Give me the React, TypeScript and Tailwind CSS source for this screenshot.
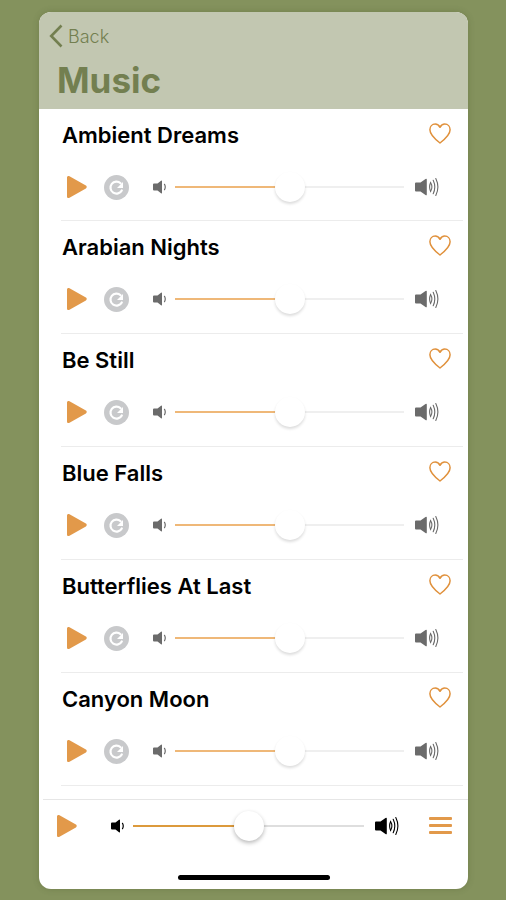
import { useState } from "react";

const tracks = [
  "Ambient Dreams",
  "Arabian Nights",
  "Be Still",
  "Blue Falls",
  "Butterflies At Last",
  "Canyon Moon",
];

export default function App() {
  return (
    <div className="flex min-h-screen flex-col bg-[#84925d] pt-3 pr-[38px] pb-[11px] pl-[39px] font-['Inter','Liberation_Sans',sans-serif]">
      <div className="flex flex-1 flex-col overflow-hidden rounded-xl bg-white shadow-[0_0_6px_rgba(60,70,30,0.25)]">
        {/* Header */}
        <header className="h-[97px] bg-[#c2c7b1] px-[10px] pt-3 text-[#737f50]">
          <a href="#back" className="flex h-6 items-center gap-[5px] text-[18px] font-light">
            <BackIcon />
            Back
          </a>
          <h1 className="mt-2 pl-2 text-[35px] leading-[48px] font-bold">Music</h1>
        </header>

        {/* Track list */}
        <ul className="flex-1 pb-[13px]">
          {tracks.map((name) => (
            <TrackRow key={name} name={name} />
          ))}
        </ul>

        {/* Player bar */}
        <footer className="ml-1 flex h-[90px] flex-col items-center border-t border-[#e6e6e6]">
          <div className="flex h-[52px] w-full items-center pr-4 pl-[14px]">
            <button type="button" aria-label="Play all">
              <PlayIcon />
            </button>
            <SpeakerLow className="ml-[34px] text-black" />
            <VolumeSlider
              label="Master volume"
              fill="#dc9a3c"
              rest="#dedede"
              thumb="[&::-webkit-slider-thumb]:shadow-[0_2px_4px_rgba(0,0,0,0.28)]"
            />
            <SpeakerHigh className="text-black" />
            <button type="button" aria-label="Playlist" className="ml-[30px]">
              <MenuIcon />
            </button>
          </div>
          <div className="mt-[23px] mr-1 h-[5px] w-[152px] rounded-full bg-black" />
        </footer>
      </div>
    </div>
  );
}

function TrackRow({ name }: { name: string }) {
  return (
    <li className="mr-[5px] ml-[22px] h-[113px] border-b border-[#ececec] pt-3 first:h-28">
      <div className="flex h-7 items-center justify-between pr-3 pl-px">
        <h2 className="text-[22px] leading-7 font-semibold text-black">{name}</h2>
        <button type="button" aria-label={`Favourite ${name}`} className="-mt-1">
          <HeartIcon />
        </button>
      </div>
      <div className="mt-[23px] flex h-[30px] items-center pr-6 pl-[6px]">
        <button type="button" aria-label={`Play ${name}`}>
          <PlayIcon />
        </button>
        <button type="button" aria-label={`Repeat ${name}`} className="ml-[17px]">
          <RepeatIcon />
        </button>
        <SpeakerLow className="ml-6 text-[#6b6b6b]" />
        <VolumeSlider
          label={`${name} volume`}
          fill="#efb878"
          rest="#efefef"
          thumb="[&::-webkit-slider-thumb]:shadow-[0_2px_3px_rgba(0,0,0,0.14)]"
        />
        <SpeakerHigh className="text-[#6b6b6b]" />
      </div>
    </li>
  );
}

type SliderProps = {
  label: string;
  fill: string;
  rest: string;
  thumb: string;
};

function VolumeSlider({ label, fill, rest, thumb }: SliderProps) {
  const [value, setValue] = useState(50);

  return (
    <input
      type="range"
      aria-label={label}
      min={0}
      max={100}
      value={value}
      onChange={(e) => setValue(Number(e.target.value))}
      className={`mr-[11px] ml-[9px] h-[30px] min-w-0 flex-1 appearance-none bg-[length:100%_2px] bg-center bg-no-repeat [&::-webkit-slider-thumb]:size-[30px] [&::-webkit-slider-thumb]:appearance-none [&::-webkit-slider-thumb]:rounded-full [&::-webkit-slider-thumb]:bg-white ${thumb}`}
      style={{
        backgroundImage: `linear-gradient(to right, ${fill} ${value}%, ${rest} ${value}%)`,
      }}
    />
  );
}

function BackIcon() {
  return (
    <svg width="14" height="24" viewBox="0 0 14 24" fill="none" stroke="currentColor" strokeWidth="2.6">
      <path d="M12.5 1.5 2.2 12l10.3 10.5" />
    </svg>
  );
}

function PlayIcon() {
  return (
    <svg className="block" width="20" height="24" viewBox="0 0 20 24" fill="#e2994a">
      <path d="M0 2.600C0 1.100 1.300.5 2.500 1.200l16.400 9.400c1.100.6 1.100 2.200 0 2.800L2.500 22.800C1.300 23.500 0 22.900 0 21.400Z" />
    </svg>
  );
}

function RepeatIcon() {
  return (
    <svg className="block" width="25" height="25" viewBox="0 0 25 25">
      <circle cx="12.5" cy="12.5" r="12.5" fill="#c8c9cb" />
      <path d="M17.8 15.4A6 6 0 1 1 16.6 8.200" fill="none" stroke="#fff" strokeWidth="2.2" strokeLinecap="round" />
      <path d="M19 7v6h-6Z" fill="#fff" />
    </svg>
  );
}

function HeartIcon() {
  return (
    <svg className="block" width="22" height="21" viewBox="0 0 22 21" fill="none" stroke="#e0913c" strokeWidth="1.5" strokeLinejoin="round">
      <path d="M11 20C5.500 15.800.9 11.700.9 6.800.9 3.500 3.200 1.100 6.200 1.100c2.100 0 3.800 1.200 4.800 3.200 1-2 2.700-3.200 4.800-3.200 3 0 5.300 2.400 5.300 5.700 0 4.900-4.600 9-10.100 13.200Z" />
    </svg>
  );
}

function SpeakerLow({ className }: { className: string }) {
  return (
    <svg className={`shrink-0 ${className}`} width="13" height="14" viewBox="0 0 13 14" fill="currentColor">
      <path d="M0 4.500Q0 3.500 1 3.500h3.500L8 .7q1-.7 1 .5v11.600q0 1.200-1 .5l-3.500-2.800H1q-1 0-1-1Z" />
      <path d="M11.500 4.300q1.500 2.700 0 5.400" fill="none" stroke="currentColor" strokeWidth="1.200" strokeLinecap="round" />
    </svg>
  );
}

function SpeakerHigh({ className }: { className: string }) {
  return (
    <svg className={`shrink-0 ${className}`} width="24" height="20" viewBox="0 0 24 20" fill="currentColor">
      <path d="M0 6.500q0-1 1-1h4.500L10.500 2q1.300-.8 1.300.6v14.800q0 1.400-1.300.6L5.500 14.500H1q-1 0-1-1Z" />
      <g fill="none" stroke="currentColor" strokeWidth="1.100" strokeLinecap="round">
        <path d="M15.600 5.500q-2 4.500 0 9 2.600-4.500 0-9Z" />
        <path d="M18.200 3.200q3.200 6.800 0 13.600" />
        <path d="M20.800 1.500q4.200 8.500 0 17" />
      </g>
    </svg>
  );
}

function MenuIcon() {
  return (
    <svg className="-mt-px block" width="23" height="17" viewBox="0 0 23 17" fill="#e2994a">
      <rect width="23" height="3" rx="1" />
      <rect y="7" width="23" height="3" rx="1" />
      <rect y="14" width="23" height="3" rx="1" />
    </svg>
  );
}
